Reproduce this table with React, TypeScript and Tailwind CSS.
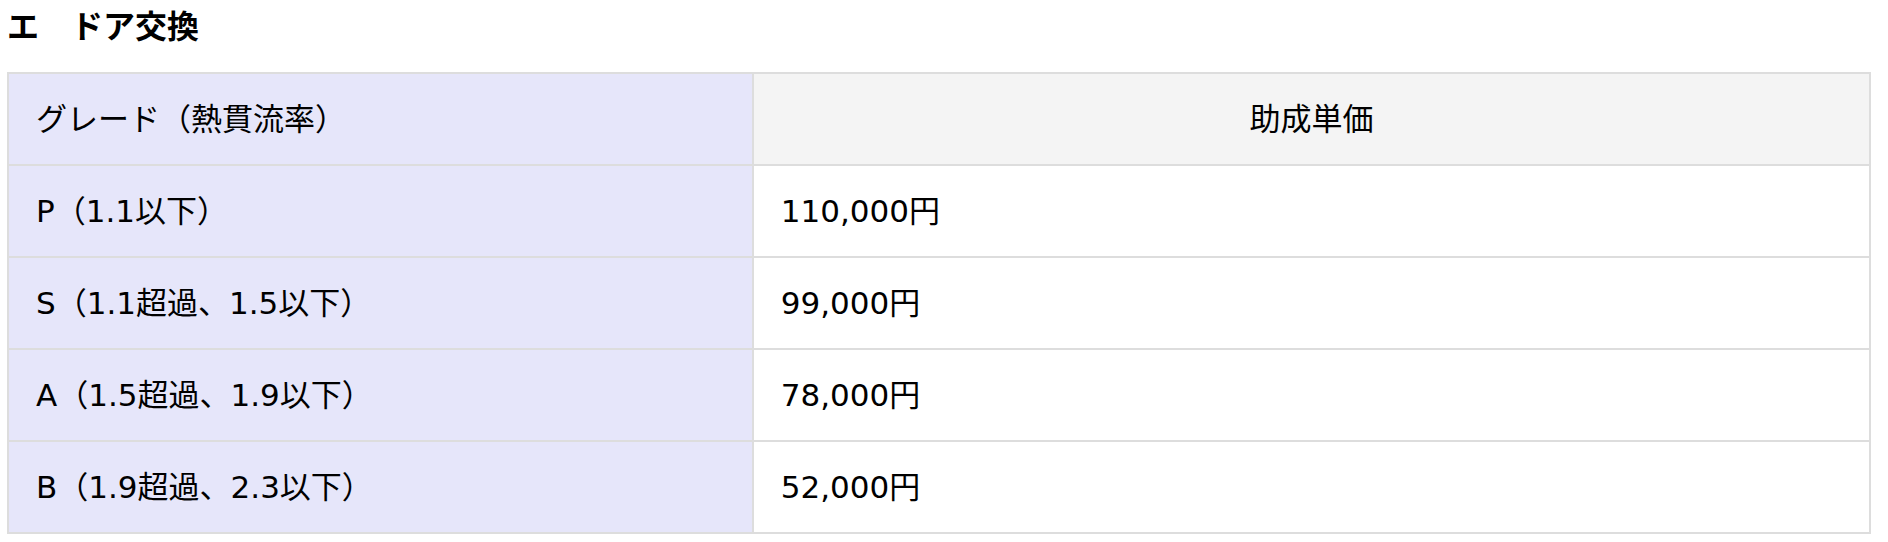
const rows = [
	{ grade: 'P（1.1以下）', price: '110,000円' },
	{ grade: 'S（1.1超過、1.5以下）', price: '99,000円' },
	{ grade: 'A（1.5超過、1.9以下）', price: '78,000円' },
	{ grade: 'B（1.9超過、2.3以下）', price: '52,000円' },
];

export default function App() {
	return (
		<div className="min-h-screen bg-white px-[7px] font-['DejaVu_Sans','Noto_Sans_CJK_JP',sans-serif] text-black">
			<h3 className="pt-[8px] font-['Noto_Sans_CJK_JP',sans-serif] text-[32px] font-bold leading-[32px]">
				エ　ドア交換
			</h3>
			<table className="mt-[32px] w-[1864px] border-collapse border-2 border-[#dddddd] text-[31px] leading-[40px]">
				<thead>
					<tr>
						<th className="h-[92px] w-[40%] border-2 border-[#dddddd] bg-[#e6e6fa] px-[27px] text-left font-normal">
							グレード（熱貫流率）
						</th>
						<th className="h-[92px] border-2 border-[#dddddd] bg-[#f4f4f4] px-[27px] text-center font-normal">
							助成単価
						</th>
					</tr>
				</thead>
				<tbody>
					{rows.map((row) => (
						<tr key={row.grade}>
							<td className="h-[92px] border-2 border-[#dddddd] bg-[#e6e6fa] px-[27px]">
								{row.grade}
							</td>
							<td className="h-[92px] border-2 border-[#dddddd] bg-white px-[27px]">
								{row.price}
							</td>
						</tr>
					))}
				</tbody>
			</table>
		</div>
	);
}
